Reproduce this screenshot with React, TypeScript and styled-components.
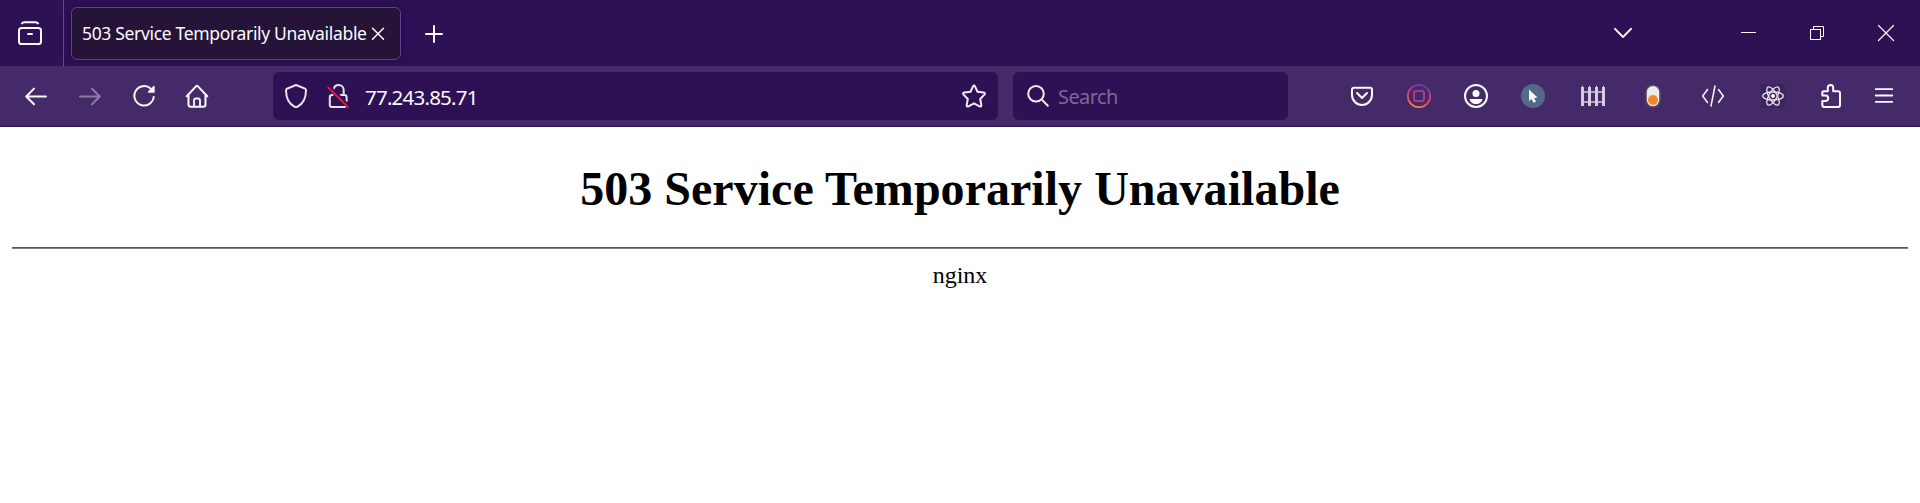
import React from 'react';
import styled, { createGlobalStyle } from 'styled-components';

const GlobalStyle = createGlobalStyle`
  html, body { margin: 0; background: #fff; overflow: hidden; }
  * { box-sizing: border-box; }
`;

const uiFont = `'Noto Sans', 'Open Sans', sans-serif`;

const Window = styled.div`
  display: flex;
  flex-direction: column;
  height: 503px;
  color: #fbfbfe;
  font-family: ${uiFont};
`;

const TabBar = styled.header`
  display: flex;
  align-items: center;
  height: 66px;
  background: #2e1055;
`;

const Slot = styled.span<{ $w: number; $shift?: number }>`
  flex: none;
  display: flex;
  justify-content: center;
  align-items: center;
  width: ${(p) => p.$w}px;
  padding-top: ${(p) => p.$shift ?? 0}px;
  svg { display: block; flex: none; }
`;

const ViewButton = styled.div`
  display: flex;
  align-items: center;
  width: 64px;
  height: 66px;
  padding-left: 17px;
  border-right: 1px solid #644b85;
`;

const Tab = styled.div`
  display: flex;
  align-items: center;
  width: 330px;
  height: 53px;
  margin-left: 7px;
  margin-top: 1px;
  padding-left: 10px;
  border: 1px solid #663b9b;
  border-radius: 6px;
  background: #251338;
  box-shadow: 0 0 6px rgba(20, 5, 40, 0.6);
`;

const TabTitle = styled.span`
  flex: none;
  width: 287px;
  padding-bottom: 2px;
  font-size: 17.5px;
  line-height: 24px;
  letter-spacing: -0.33px;
  white-space: nowrap;
`;

const Spacer = styled.div`
  flex: 1;
`;

const Toolbar = styled.nav`
  display: flex;
  align-items: center;
  height: 61px;
  padding-right: 11.5px;
  background: #452a69;
  border-bottom: 1px solid #2e1055;
`;

const NavButtons = styled.div`
  display: flex;
  width: 273px;
  padding-left: 9px;
`;

const Field = styled.div<{ $w: number; $gap: number; $pad?: number }>`
  display: flex;
  align-items: center;
  width: ${(p) => p.$w}px;
  height: 48px;
  margin-right: ${(p) => p.$gap}px;
  padding-left: ${(p) => p.$pad ?? 0}px;
  border-radius: 6px;
  background: #2e1055;
`;

const Address = styled.span`
  flex: 1;
  padding-left: 8px;
  padding-top: 2px;
  font-size: 20.5px;
  line-height: 28px;
  letter-spacing: -0.78px;
`;

const Placeholder = styled.span`
  padding-left: 7px;
  padding-top: 2px;
  font-size: 20px;
  line-height: 28px;
  letter-spacing: -0.6px;
  color: #7d6996;
`;

const Page = styled.main`
  flex: 1;
  padding: 0 12px;
  background: #fff;
  color: #000;
  font-family: 'Liberation Serif', 'Times New Roman', serif;
  font-size: 24px;
  text-align: center;
`;

const Title = styled.h1`
  margin: 35px 0 31px;
  font-size: 48px;
  line-height: 54px;
  font-weight: 700;
  letter-spacing: 0.03px;
`;

const Rule = styled.hr`
  height: 2px;
  margin: 0 0 12px;
  border: 0;
  border-top: 1px solid #555;
  border-bottom: 1px solid #808080;
`;

const Server = styled.div`
  line-height: 28px;
`;

type IconProps = { children: React.ReactNode; size?: number; sw?: number; color?: string };

const Icon = ({ children, size = 26, sw = 2, color = '#fbfbfe' }: IconProps) => (
  <svg
    width={size}
    height={size}
    viewBox={`${-size / 2} ${-size / 2} ${size} ${size}`}
    fill="none"
    stroke={color}
    strokeWidth={sw}
    strokeLinecap="round"
    strokeLinejoin="round"
  >
    {children}
  </svg>
);

const ORBITS = [0, 60, 120];
const PICKETS = [-10.5, -3.5, 3.5, 10.5];

export default function App() {
  return (
    <>
      <GlobalStyle />
      <Window>
        <TabBar>
          <ViewButton>
            <Icon>
              <path d="M-8-9.6Q-7.4-10.8-5.6-10.8H5.6Q7.4-10.8 8-9.6" />
              <rect x="-11" y="-5" width="22" height="16" rx="2.6" />
              <path d="M-2 1H2" />
            </Icon>
          </ViewButton>
          <Tab>
            <TabTitle>503 Service Temporarily Unavailable</TabTitle>
            <Slot $w={18}>
              <Icon size={18} sw={1.5}><path d="M-5.5-5.8L5.5 5.2M5.5-5.8L-5.5 5.2" /></Icon>
            </Slot>
          </Tab>
          <Slot $w={66} $shift={2}>
            <Icon size={24} sw={2}><path d="M-8 0H8M0-8V8" /></Icon>
          </Slot>
          <Spacer />
          <Slot $w={60}>
            <Icon size={24} sw={1.9}><path d="M-8-4.2L0 4L8-4.2" /></Icon>
          </Slot>
          <Slot $w={60} />
          <Slot $w={69}>
            <Icon size={24} sw={1}><path d="M-7-.5H8" strokeLinecap="butt" /></Icon>
          </Slot>
          <Slot $w={69}>
            <Icon size={24} sw={1}>
              <g strokeLinejoin="miter">
                <rect x="-6.5" y="-3.5" width="10" height="10" />
                <path d="M-3.5-3.5V-6.5H6.5V3.5H3.5" />
              </g>
            </Icon>
          </Slot>
          <Slot $w={69}>
            <Icon size={24} sw={1.2}><path d="M-7.5-7.5L7.5 7.5M7.5-7.5L-7.5 7.5" /></Icon>
          </Slot>
        </TabBar>

        <Toolbar>
          <NavButtons>
            <Slot $w={54}>
              <Icon><path d="M10 .5H-9.5M-2-7.4L-9.8.5L-2 8.2" /></Icon>
            </Slot>
            <Slot $w={54}>
              <Icon color="#8c7ba5"><path d="M-10 .5H9.5M2-7.4L9.8.5L2 8.2" /></Icon>
            </Slot>
            <Slot $w={54}>
              <Icon>
                <path d="M6.8-7.2A9.7 9.7 0 1 0 9.7 1" />
                <path d="M10-9.5V-4H4.5Z" fill="#fbfbfe" strokeWidth="1.4" />
              </Icon>
            </Slot>
            <Slot $w={52}>
              <Icon>
                <path d="M-10.3 .2L-1-9.6Q0-10.6 1-9.6L10.3 .2" />
                <path d="M-8.5-1V8.4Q-8.5 10.7-6.2 10.7H6.2Q8.5 10.7 8.5 8.4V-1" />
                <path d="M-3 10.5V4.5Q-3 2.5-1 2.5H1Q3 2.5 3 4.5V10.5" strokeWidth="1.8" />
              </Icon>
            </Slot>
          </NavButtons>

          <Field $w={725} $gap={15}>
            <Slot $w={46}>
              <Icon color="#e8e4ee">
                <path d="M0-11L9-7.3Q10-6.9 10-5.8C10 2 6.7 8 1.2 10.8Q0 11.3-1.2 10.8C-6.7 8-10 2-10-5.8Q-10-6.9-9-7.3Z" />
              </Icon>
            </Slot>
            <Slot $w={38}>
              <Icon color="#e8e4ee">
                <path d="M-4.5-6.5C-3.8-9.6-2-11 .5-11C3.5-11 5.7-8.8 5.7-5.8V-1H2.5M-5.5-1Q-8.2-1 -8.2 1.2V8.7Q-8.2 11-6 11H7M5-1H6.3Q8.6-1 8.6 1.2V5" />
                <path d="M-8-9.5L11.5 10" stroke="#2e1055" strokeWidth="2" />
                <path d="M-9.8-8.6L9.8 11" stroke="#e2184f" strokeWidth="1.9" />
              </Icon>
            </Slot>
            <Address>77.243.85.71</Address>
            <Slot $w={48}>
              <Icon color="#efedf3">
                <path d="M-1-9.6Q0-11.5 1-9.6L3.5-4.3L9.7-3.4Q11.8-3 10.4-1.4L6.2 3L7.3 9Q7.5 11.2 5.5 10.3L0 7.4L-5.5 10.3Q-7.5 11.2-7.3 9L-6.2 3L-10.4-1.4Q-11.8-3-9.7-3.4L-3.5-4.3Z" />
              </Icon>
            </Slot>
          </Field>

          <Field $w={275} $gap={0} $pad={12}>
            <Slot $w={26}>
              <Icon color="#efedf3">
                <circle cx="-2" cy="-2.3" r="7.8" />
                <path d="M3.8 3.6L9.8 9.8" />
              </Icon>
            </Slot>
            <Placeholder>Search</Placeholder>
          </Field>
          <Spacer />

          <Slot $w={57}>
            <Icon>
              <path d="M-8-8.2H8Q10-8.2 10-6.2V-1A10 10 0 0 1-10-1V-6.2Q-10-8.2-8-8.2Z" />
              <path d="M-5-3L0 2L5-3" />
            </Icon>
          </Slot>
          <Slot $w={57}>
            <Icon color="url(#sunset)">
              <defs>
                <linearGradient id="sunset" gradientUnits="userSpaceOnUse" x1="-1" y1="12" x2="6" y2="-11">
                  <stop offset="0" stopColor="#f98a48" />
                  <stop offset=".25" stopColor="#e85558" />
                  <stop offset=".65" stopColor="#c6359a" />
                  <stop offset="1" stopColor="#5b3db0" />
                </linearGradient>
              </defs>
              <circle r="11.2" strokeWidth="1.7" />
              <rect x="-5" y="-5" width="10" height="10" rx="2" stroke="#cf3f86" strokeWidth="1.6" />
            </Icon>
          </Slot>
          <Slot $w={57}>
            <Icon>
              <circle r="11" />
              <g fill="#fff" stroke="none">
                <circle cy="-2.5" r="3.5" />
                <path d="M-6.5 3H6.5C6 6 3.5 8-0 8S-6 6-6.5 3Z" />
              </g>
            </Icon>
          </Slot>
          <Slot $w={57}>
            <Icon>
              <g stroke="none">
                <circle r="12" fill="#526988" />
                <path d="M-4-6.5V5L-1.5 3L.6 6.7L3 5.5L1 2L4.5 1.5Z" fill="#fff" />
              </g>
            </Icon>
          </Slot>
          <Slot $w={63}>
            <Icon color="#d4cddd">
              <path d="M-11-4H11M-11 6H11" strokeWidth="1.7" strokeLinecap="butt" />
              {PICKETS.map((x) => (
                <path key={x} d={`M${x}-9V10`} strokeWidth="3" strokeLinecap="butt" />
              ))}
              {PICKETS.map((x) => (
                <path key={x} d={`M${x - 0.5}-9.5H${x + 0.5}`} strokeWidth="1.5" strokeLinecap="butt" />
              ))}
            </Icon>
          </Slot>
          <Slot $w={57}>
            <Icon>
              <rect x="-7" y="-10.8" width="14" height="21.8" rx="7" fill="#ececec" stroke="#554c58" strokeWidth="1.6" />
              <circle cy="4" r="5" fill="#f5832f" stroke="none" />
            </Icon>
          </Slot>
          <Slot $w={63}>
            <Icon sw={1.5}>
              <path d="M-5.5-6.5L-10.3 0L-5.5 6.5M5.5-6.5L10.3 0L5.5 6.5M2-10L-2 10" />
            </Icon>
          </Slot>
          <Slot $w={57}>
            <Icon sw={1.3} color="#e9e5ef">
              <rect x="-12" y="-12" width="24" height="24" rx="2" fill="#3c245c" stroke="none" />
              {ORBITS.map((angle) => (
                <ellipse key={angle} rx="10.3" ry="4" transform={`rotate(${angle})`} />
              ))}
              <circle r="2" fill="#fff" stroke="none" />
            </Icon>
          </Slot>
          <Slot $w={58}>
            <Icon>
              <path d="M-7-4.8H-3.2V-8.2A2.7 2.7 0 0 1 2.2-8.2V-4.8H7Q9-4.8 9-2.8V9Q9 11 7 11H-6.7Q-8.7 11-8.7 9V5H-5.5A2.7 2.7 0 0 0-5.5-.4H-8.7V-3Q-8.7-4.8-7-4.8" />
            </Icon>
          </Slot>
          <Slot $w={49}>
            <Icon sw={1.8}><path d="M-8.3-6.8H8.3M-8.3-.5H8.3M-8.3 5.8H8.3" /></Icon>
          </Slot>
        </Toolbar>

        <Page>
          <Title>503 Service Temporarily Unavailable</Title>
          <Rule />
          <Server>nginx</Server>
        </Page>
      </Window>
    </>
  );
}
